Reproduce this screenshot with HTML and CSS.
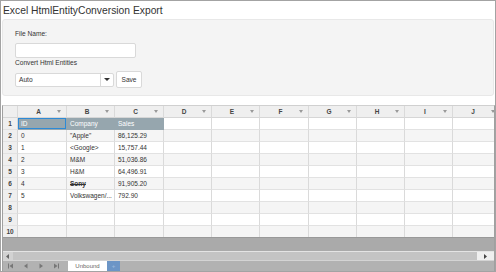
FILE: index.html
```html
<!DOCTYPE html>
<html lang="en">

<head>
    <meta charset="UTF-8">
    <title>Excel HtmlEntityConversion Export</title>
    <link rel="stylesheet" href="styles.css">
</head>

<body>
    <div class="frame">
        <h1 class="title">Excel HtmlEntityConversion Export</h1>

        <div class="panel">
            <label class="lbl" for="file_name">File Name:</label>
            <input class="txt" type="text" id="file_name">

            <label class="lbl lbl-2">Convert Html Entities</label>
            <div class="actions">
                <div class="combo">
                    <span class="combo-val">Auto</span>
                    <span class="combo-btn"><span class="caret"></span></span>
                </div>
                <button class="btn">Save</button>
            </div>
        </div>

        <div class="sheet">
            <div class="cells">
                <table class="grid">
                    <colgroup>
                        <col style="width:15px">
                        <col style="width:49px">
                        <col style="width:48px">
                        <col style="width:49px">
                        <col style="width:48px">
                        <col style="width:48px">
                        <col style="width:49px">
                        <col style="width:48px">
                        <col style="width:48px">
                        <col style="width:48px">
                        <col style="width:48px">
                    </colgroup>
                    <thead>
                        <tr>
                            <th class="corner"></th>
                            <th><div class="colhd"><span class="letter">A</span><span class="flt"></span></div></th>
                            <th><div class="colhd"><span class="letter">B</span><span class="flt"></span></div></th>
                            <th><div class="colhd"><span class="letter">C</span><span class="flt"></span></div></th>
                            <th><div class="colhd"><span class="letter">D</span><span class="flt"></span></div></th>
                            <th><div class="colhd"><span class="letter">E</span><span class="flt"></span></div></th>
                            <th><div class="colhd"><span class="letter">F</span><span class="flt"></span></div></th>
                            <th><div class="colhd"><span class="letter">G</span><span class="flt"></span></div></th>
                            <th><div class="colhd"><span class="letter">H</span><span class="flt"></span></div></th>
                            <th><div class="colhd"><span class="letter">I</span><span class="flt"></span></div></th>
                            <th><div class="colhd"><span class="letter">J</span><span class="flt"></span></div></th>
                        </tr>
                    </thead>
                    <tbody>
                        <tr>
                            <td class="rn">1</td>
                            <td class="hdr sel">ID</td><td class="hdr">Company</td><td class="hdr">Sales</td>
                            <td></td><td></td><td></td><td></td><td></td><td></td><td></td>
                        </tr>
                        <tr class="alt">
                            <td class="rn">2</td>
                            <td>0</td><td>"Apple"</td><td>86,125.29</td>
                            <td></td><td></td><td></td><td></td><td></td><td></td><td></td>
                        </tr>
                        <tr>
                            <td class="rn">3</td>
                            <td>1</td><td>&lt;Google&gt;</td><td>15,757.44</td>
                            <td></td><td></td><td></td><td></td><td></td><td></td><td></td>
                        </tr>
                        <tr class="alt">
                            <td class="rn">4</td>
                            <td>2</td><td>M&amp;M</td><td>51,036.86</td>
                            <td></td><td></td><td></td><td></td><td></td><td></td><td></td>
                        </tr>
                        <tr>
                            <td class="rn">5</td>
                            <td>3</td><td>H&amp;M</td><td>64,496.91</td>
                            <td></td><td></td><td></td><td></td><td></td><td></td><td></td>
                        </tr>
                        <tr class="alt">
                            <td class="rn">6</td>
                            <td>4</td><td class="strike">Sony</td><td>91,905.20</td>
                            <td></td><td></td><td></td><td></td><td></td><td></td><td></td>
                        </tr>
                        <tr>
                            <td class="rn">7</td>
                            <td>5</td><td>Volkswagen/...</td><td>792.90</td>
                            <td></td><td></td><td></td><td></td><td></td><td></td><td></td>
                        </tr>
                        <tr class="alt">
                            <td class="rn">8</td>
                            <td></td><td></td><td></td>
                            <td></td><td></td><td></td><td></td><td></td><td></td><td></td>
                        </tr>
                        <tr>
                            <td class="rn">9</td>
                            <td></td><td></td><td></td>
                            <td></td><td></td><td></td><td></td><td></td><td></td><td></td>
                        </tr>
                        <tr class="alt">
                            <td class="rn">10</td>
                            <td></td><td></td><td></td>
                            <td></td><td></td><td></td><td></td><td></td><td></td><td></td>
                        </tr>
                    </tbody>
                </table>
            </div>

            <div class="spare"></div>

            <div class="hscroll">
                <span class="sb-btn sb-left">
                    <svg width="4" height="5" viewBox="0 0 4 5"><path d="M3 0 L0 2.5 L3 5 Z" fill="#666"/></svg>
                </span>
                <span class="sb-track"></span>
                <span class="sb-btn sb-right">
                    <svg width="4" height="5" viewBox="0 0 4 5"><path d="M0 0 L3 2.5 L0 5 Z" fill="#444"/></svg>
                </span>
            </div>

            <div class="tabs">
                <div class="tab-nav">
                    <svg width="6" height="6" viewBox="0 0 6 6"><rect x="0" y="0.5" width="1" height="5" fill="#777"/><path d="M5 0.5 L1.5 3 L5 5.5 Z" fill="#777"/></svg>
                    <svg width="6" height="6" viewBox="0 0 6 6"><path d="M4.5 0.5 L1 3 L4.5 5.5 Z" fill="#777"/></svg>
                    <svg width="6" height="6" viewBox="0 0 6 6"><path d="M1.5 0.5 L5 3 L1.5 5.5 Z" fill="#777"/></svg>
                    <svg width="6" height="6" viewBox="0 0 6 6"><path d="M1 0.5 L4.5 3 L1 5.5 Z" fill="#777"/><rect x="5" y="0.5" width="1" height="5" fill="#777"/></svg>
                </div>
                <div class="tab active">Unbound</div>
                <div class="tab add">+</div>
            </div>
        </div>
    </div>
</body>

</html>
```

FILE: styles.css
```css
/* General Styles */
body {
    margin: 0;
    padding: 0;
    font-family: 'Liberation Sans', Arial, sans-serif;
    color: #333;
    background-color: #fff;
}

.frame {
    width: 496px;
    height: 272px;
    box-sizing: border-box;
    border: 1px solid #a3a3a3;
    overflow: hidden;
}

.title {
    margin: 0;
    padding: 3px 2px 0;
    font-size: 10.3px;
    font-weight: normal;
    line-height: 14px;
    color: #333;
}

/* Options panel */
.panel {
    margin: 1px 1px 0 1px;
    height: 77px;
    box-sizing: border-box;
    padding: 10px 12px 0;
    background-color: #f4f4f4;
    border: 1px solid #e8e8e8;
    border-radius: 3px;
    display: flex;
    flex-direction: column;
    align-items: flex-start;
}

.lbl {
    font-size: 6.6px;
    line-height: 8px;
    color: #333;
}

.lbl-2 {
    margin-top: 1px;
}

.txt {
    margin-top: 5px;
    width: 121px;
    height: 15px;
    box-sizing: border-box;
    border: 1px solid #d9d9d9;
    border-radius: 2px;
    background-color: #fff;
    padding: 0;
}

.actions {
    margin-top: 4px;
    display: flex;
    align-items: center;
    gap: 2px;
}

.combo {
    width: 99px;
    height: 14px;
    box-sizing: border-box;
    border: 1px solid #d9d9d9;
    border-radius: 2px;
    background-color: #fff;
    display: flex;
    align-items: center;
}

.combo-val {
    flex: 1;
    padding-left: 3px;
    font-size: 6.6px;
    color: #333;
}

.combo-btn {
    width: 12px;
    height: 100%;
    border-left: 1px solid #d9d9d9;
    display: flex;
    align-items: center;
    justify-content: center;
}

.caret {
    width: 0;
    height: 0;
    border-left: 3px solid transparent;
    border-right: 3px solid transparent;
    border-top: 3px solid #333;
}

.btn {
    width: 26px;
    height: 17px;
    padding: 0;
    font-family: inherit;
    font-size: 6.6px;
    color: #333;
    background-color: #fff;
    border: 1px solid #d9d9d9;
    border-radius: 2px;
}

/* Spreadsheet */
.sheet {
    margin: 9px 0 0 1px;
    border: 1px solid #a0a0a0;
    border-top-color: #d0d0d0;
    border-bottom: none;
    display: flex;
    flex-direction: column;
}

.cells {
    overflow: hidden;
    height: 131px;
    background-color: #fff;
}

.grid {
    table-layout: fixed;
    border-collapse: separate;
    border-spacing: 0;
    width: 498px;
    font-size: 6.5px;
}

.grid th,
.grid td {
    height: 12px;
    box-sizing: border-box;
    padding: 0 3px;
    border-right: 1px solid #dadada;
    border-bottom: 1px solid #e2e2e2;
    line-height: 11px;
    white-space: nowrap;
    overflow: hidden;
    text-align: left;
    color: #333;
}

.grid th {
    background-color: #efefef;
    border-bottom-color: #d6d6d6;
    font-weight: bold;
    color: #444;
    padding: 0;
}

.colhd {
    display: flex;
    align-items: center;
}

.colhd .letter {
    flex: 1;
    text-align: center;
    padding-left: 2px;
}

.colhd .flt {
    width: 0;
    height: 0;
    margin-right: 5px;
    border-left: 2px solid transparent;
    border-right: 2px solid transparent;
    border-top: 3px solid #999;
}

.grid td.rn {
    background-color: #efefef;
    border-right-color: #d6d6d6;
    text-align: center;
    font-weight: bold;
    padding: 0;
    color: #444;
}

.grid tr.alt td {
    background-color: #f5f5f5;
}

.grid tr.alt td.rn {
    background-color: #efefef;
}

.grid td.hdr {
    background-color: #96a6ae;
    color: #fff;
    border-right-color: #96a6ae;
    border-bottom-color: #96a6ae;
}

.grid td.sel {
    box-shadow: inset 0 0 0 1px #2d8ad6;
}

.grid td.strike {
    text-decoration: line-through;
    font-weight: bold;
}

.spare {
    height: 13px;
    background-color: #aaaaaa;
    border-top: 1px solid #999;
}

.hscroll {
    height: 8px;
    display: flex;
    background-color: #c4c4c4;
    border-top: 1px solid #e4e4e4;
}

.sb-btn {
    display: flex;
    align-items: center;
    justify-content: center;
}

.sb-left {
    width: 10px;
    background-color: #d2d2d2;
}

.sb-track {
    flex: 1;
}

.sb-right {
    width: 17px;
    background-color: #efefef;
}

.tabs {
    height: 10px;
    display: flex;
    align-items: stretch;
    background-color: #b2b2b2;
    border-top: 1px solid #d4d4d4;
}

.tab-nav {
    width: 60px;
    display: flex;
    align-items: center;
    gap: 9px;
    padding-left: 5px;
}

.tab {
    font-size: 6px;
    line-height: 10px;
    text-align: center;
}

.tab.active {
    width: 39px;
    background-color: #fff;
    color: #666;
}

.tab.add {
    width: 13px;
    background-color: #6c95c6;
    color: #9ab6da;
    font-weight: bold;
}
```
